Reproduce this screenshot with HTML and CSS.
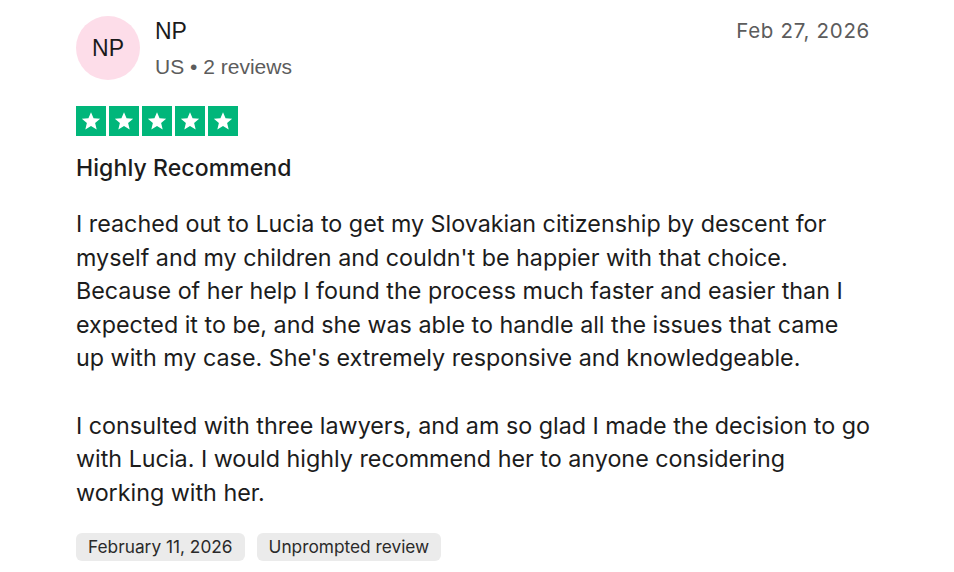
FILE: index.html
```html
<!DOCTYPE html>
<html lang="en">
<head>
<meta charset="utf-8">
<title>Review</title>
<link rel="stylesheet" href="styles.css">
</head>
<body>
<article class="review">
  <header class="head">
    <div class="avatar">NP</div>
    <div class="who">
      <div class="name">NP</div>
      <div class="meta">US • 2 reviews</div>
    </div>
    <time class="date">Feb 27, 2026</time>
  </header>
  <div class="stars" aria-label="Rated 5 out of 5">
    <span class="star"><svg viewBox="0 0 24 24"><path d="M12 3.2l2.55 6.1 6.6.5-5.03 4.3 1.56 6.43L12 17.06 6.32 20.53l1.56-6.43L2.85 9.8l6.6-.5z"/></svg></span>
    <span class="star"><svg viewBox="0 0 24 24"><path d="M12 3.2l2.55 6.1 6.6.5-5.03 4.3 1.56 6.43L12 17.06 6.32 20.53l1.56-6.43L2.85 9.8l6.6-.5z"/></svg></span>
    <span class="star"><svg viewBox="0 0 24 24"><path d="M12 3.2l2.55 6.1 6.6.5-5.03 4.3 1.56 6.43L12 17.06 6.32 20.53l1.56-6.43L2.85 9.8l6.6-.5z"/></svg></span>
    <span class="star"><svg viewBox="0 0 24 24"><path d="M12 3.2l2.55 6.1 6.6.5-5.03 4.3 1.56 6.43L12 17.06 6.32 20.53l1.56-6.43L2.85 9.8l6.6-.5z"/></svg></span>
    <span class="star"><svg viewBox="0 0 24 24"><path d="M12 3.2l2.55 6.1 6.6.5-5.03 4.3 1.56 6.43L12 17.06 6.32 20.53l1.56-6.43L2.85 9.8l6.6-.5z"/></svg></span>
  </div>
  <h2 class="title">Highly Recommend</h2>
  <div class="body">
    <p>I reached out to Lucia to get my Slovakian citizenship by descent for myself and my children and couldn't be happier with that choice. Because of her help I found the process much faster and easier than I expected it to be, and she was able to handle all the issues that came up with my case. She's extremely responsive and knowledgeable.</p>
    <p>I consulted with three lawyers, and am so glad I made the decision to go with Lucia. I would highly recommend her to anyone considering working with her.</p>
  </div>
  <div class="tags">
    <span class="tag">February 11, 2026</span>
    <span class="tag">Unprompted review</span>
  </div>
</article>
</body>
</html>
```
FILE: styles.css
```css
html, body {
  margin: 0;
  padding: 0;
  background: #ffffff;
}
body {
  font-family: Inter, "Liberation Sans", sans-serif;
  color: #1c1c1c;
}
.review {
  width: 794px;
  padding: 16px 0 0 76px;
}
.head {
  display: flex;
  align-items: flex-start;
}
.avatar {
  width: 64px;
  height: 64px;
  border-radius: 50%;
  background: #fddde9;
  display: flex;
  align-items: center;
  justify-content: center;
  font-family: "Liberation Sans", Arial, sans-serif;
  font-size: 23px;
  color: #1a1a1a;
  flex: none;
}
.who {
  margin-left: 15px;
  flex: 1;
}
.name {
  font-family: "Liberation Sans", Arial, sans-serif;
  font-size: 23px;
  line-height: 30px;
  color: #1a1a1a;
}
.meta {
  font-family: "Liberation Sans", Arial, sans-serif;
  font-size: 21px;
  line-height: 24px;
  margin-top: 9px;
  color: #5c5c5c;
}
.date {
  font-size: 20.5px;
  line-height: 30px;
  color: #5c5c5c;
  letter-spacing: 0.7px;
}
.stars {
  display: flex;
  gap: 3px;
  margin-top: 26px;
}
.star {
  width: 30px;
  height: 30px;
  background: #00b67a;
  display: flex;
  align-items: center;
  justify-content: center;
}
.star svg {
  width: 24px;
  height: 24px;
  fill: #ffffff;
}
.title {
  margin: 16px 0 0;
  font-size: 23px;
  font-weight: 500;
  line-height: 32px;
  letter-spacing: 0.1px;
}
.body {
  width: 795px;
  margin-top: 23px;
  font-size: 23.3px;
  line-height: 33.6px;
}
.body p {
  margin: 0 0 33.6px;
}
.body p:last-child {
  margin-bottom: 0;
}
.tags {
  display: flex;
  gap: 12px;
  margin-top: 24px;
}
.tag {
  background: #ebebeb;
  border-radius: 6px;
  padding: 0 12px;
  height: 28px;
  line-height: 28px;
  font-size: 17.3px;
  color: #2a2a2a;
}
```
